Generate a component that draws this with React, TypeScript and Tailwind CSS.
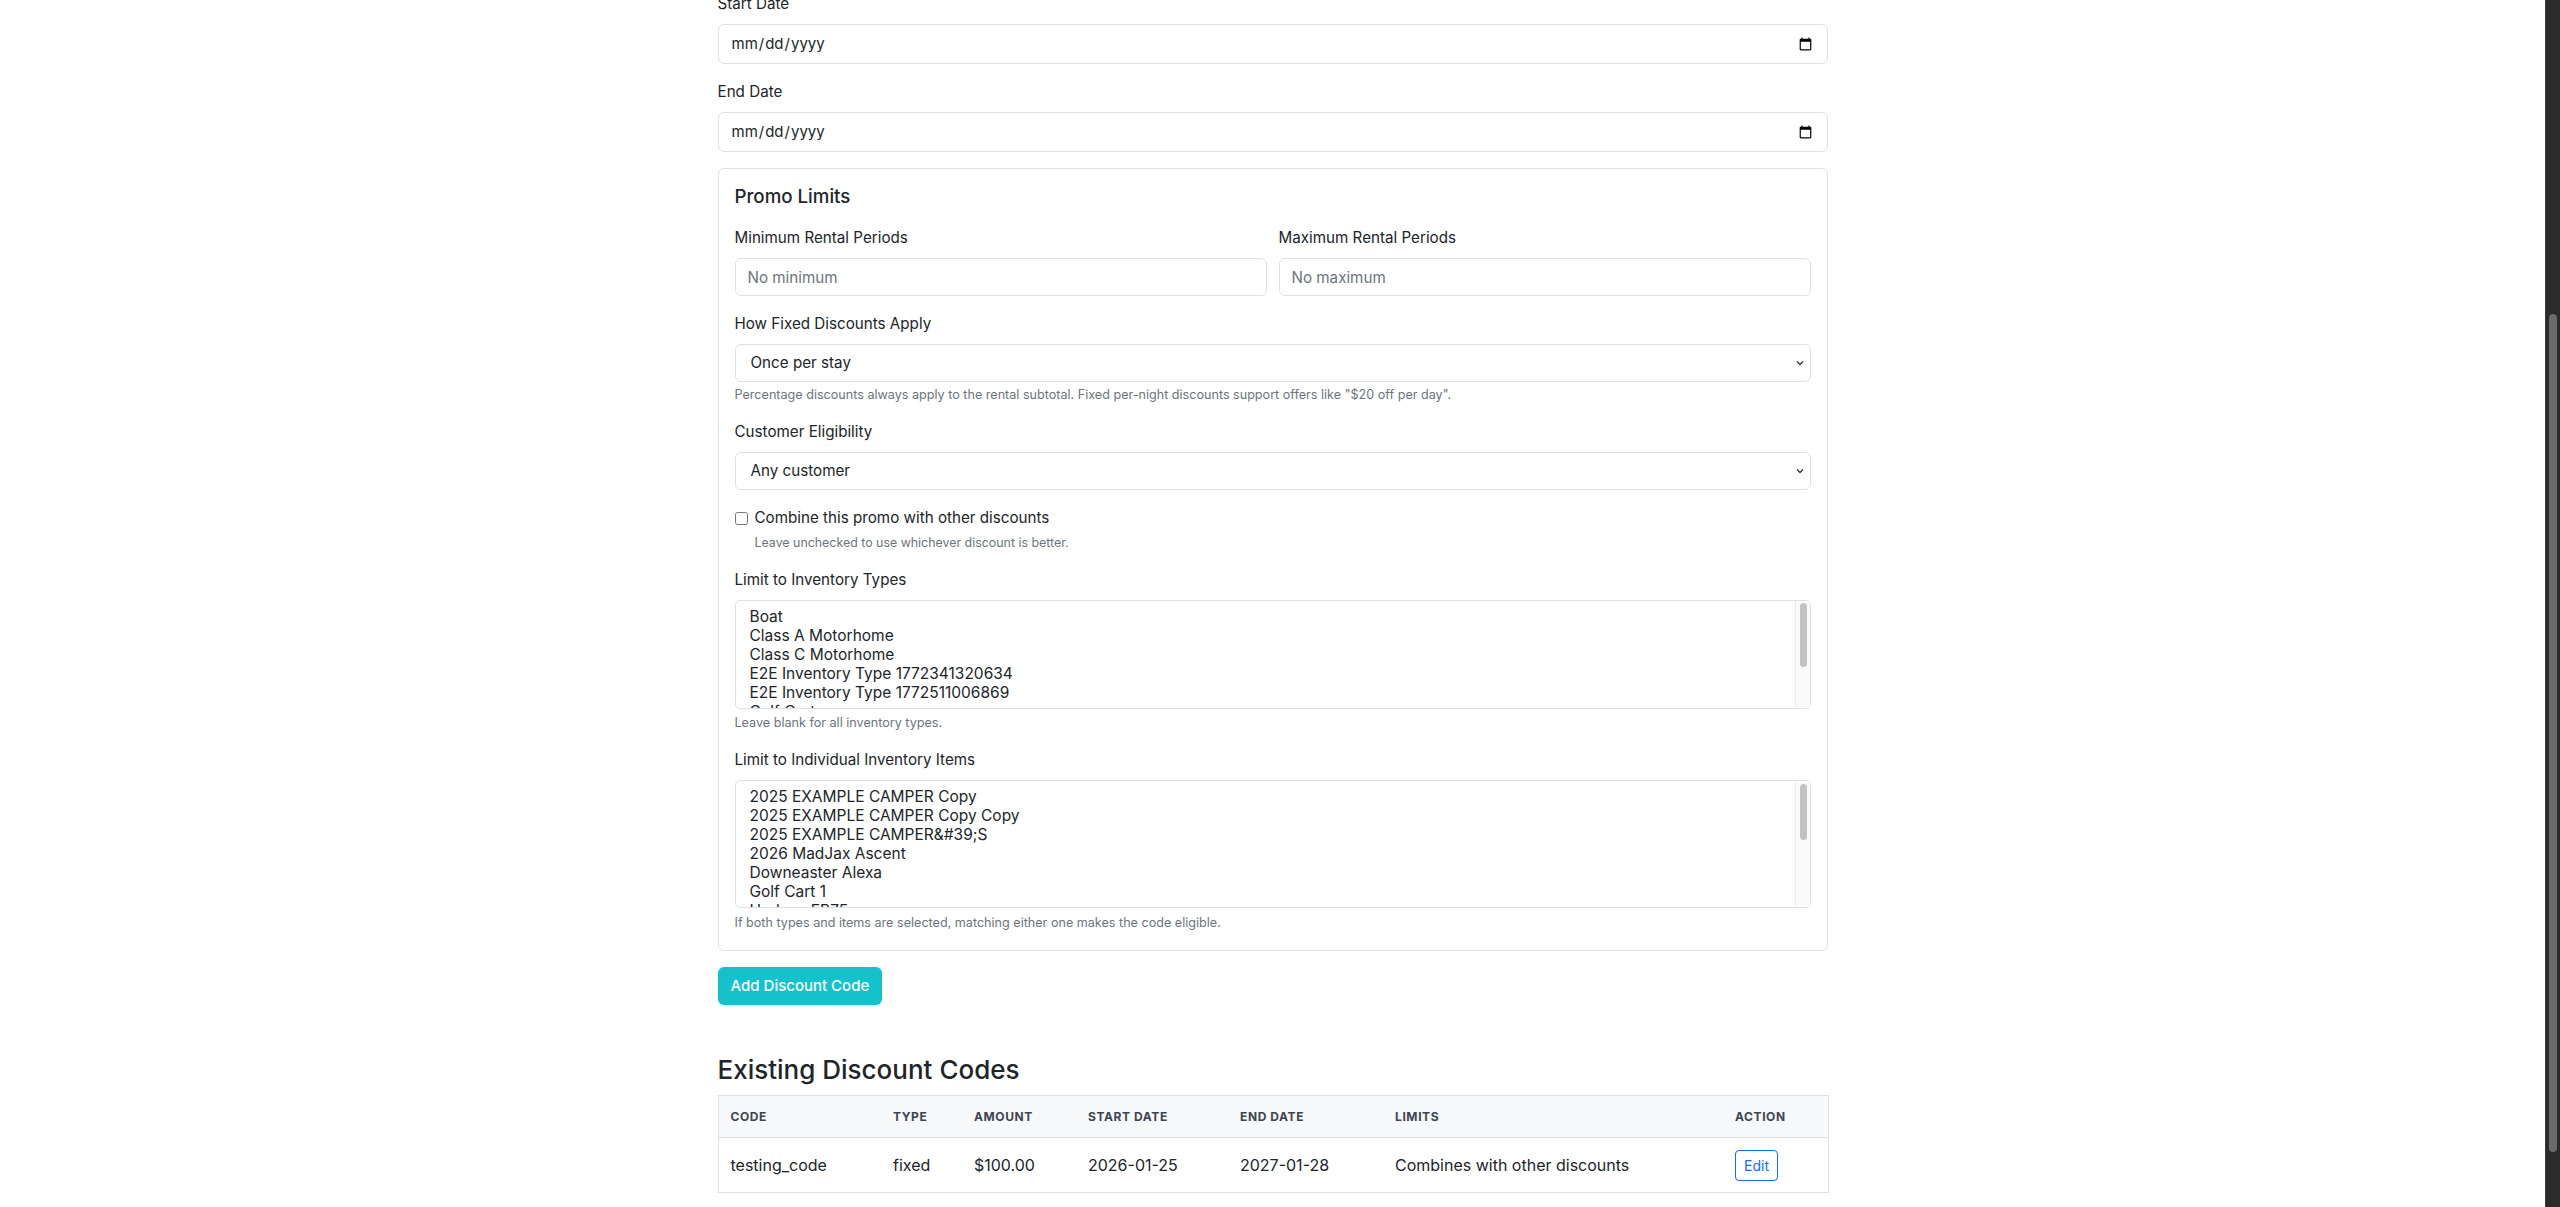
import React from "react";

const inventoryTypes = [
  "Boat",
  "Class A Motorhome",
  "Class C Motorhome",
  "E2E Inventory Type 1772341320634",
  "E2E Inventory Type 1772511006869",
  "Golf Cart",
];

const inventoryItems = [
  "2025 EXAMPLE CAMPER Copy",
  "2025 EXAMPLE CAMPER Copy Copy",
  "2025 EXAMPLE CAMPER&#39;S",
  "2026 MadJax Ascent",
  "Downeaster Alexa",
  "Golf Cart 1",
  "Hudson EB75",
];

function Chevron() {
  return (
    <svg
      className="pointer-events-none absolute right-[7px] top-1/2 -translate-y-1/2"
      width="8"
      height="6"
      viewBox="0 0 8 6"
      fill="none"
    >
      <path d="M1 1.5 4 4.5 7 1.5" stroke="#333" strokeWidth="1.3" />
    </svg>
  );
}

function ListBox({
  items,
  height,
  thumbTop,
  thumbHeight,
}: {
  items: string[];
  height: string;
  thumbTop: string;
  thumbHeight: string;
}) {
  return (
    <div
      role="listbox"
      className={`relative ${height} overflow-hidden rounded-[5px] border border-[#dee2e6] bg-white py-[6px]`}
    >
      {items.map((item) => (
        <div key={item} className="h-[19px] px-[14px] text-[15.5px] leading-[19px] text-[#212529]">
          {item}
        </div>
      ))}
      {/* scrollbar track overlays the options */}
      <div className="absolute right-0 top-0 bottom-0 w-[15px] border-l border-[#ececec] bg-[#fafafa]">
        <div className={`absolute left-[4px] ${thumbTop} ${thumbHeight} w-[7px] rounded-full bg-[#c2c2c2]`} />
      </div>
    </div>
  );
}

export default function App() {
  return (
    <div className="flex h-screen overflow-hidden bg-white font-['Inter','Liberation_Sans',sans-serif] text-[#212529]">
      <main className="min-w-0 flex-1">
        <div className="mx-auto -mt-[8px] w-[1110px] text-[15.2px]">
          {/* dates */}
          <div className="mb-4">
            <label className="mb-2 block leading-6">Start Date</label>
            <input
              type="date"
              className="block h-[40px] w-full rounded-md border border-[#dee2e6] px-3 text-[15px] text-[#212529]"
            />
          </div>
          <div className="mb-4">
            <label className="mb-2 block leading-6">End Date</label>
            <input
              type="date"
              className="block h-[40px] w-full rounded-md border border-[#dee2e6] px-3 text-[15px] text-[#212529]"
            />
          </div>

          {/* promo limits card */}
          <div className="mb-4 rounded-md border border-[#dee2e6] px-4 pt-4 pb-[18px]">
            <h5 className="mb-[17px] text-[18.7px] font-medium leading-6">Promo Limits</h5>

            <div className="mb-4 grid grid-cols-2 gap-3">
              <div>
                <label className="mb-2 block leading-6">Minimum Rental Periods</label>
                <input
                  type="number"
                  placeholder="No minimum"
                  className="block h-[38px] w-full rounded-md border border-[#dee2e6] px-3 placeholder:text-[#6c757d]"
                />
              </div>
              <div>
                <label className="mb-2 block leading-6">Maximum Rental Periods</label>
                <input
                  type="number"
                  placeholder="No maximum"
                  className="block h-[38px] w-full rounded-md border border-[#dee2e6] px-3 placeholder:text-[#6c757d]"
                />
              </div>
            </div>

            <div className="mb-4">
              <label className="mb-2 block leading-6">How Fixed Discounts Apply</label>
              <div className="relative">
                <select className="block h-[38px] w-full appearance-none rounded-md border border-[#dee2e6] bg-white pl-[15px] pr-8">
                  <option>Once per stay</option>
                  <option>Per rental period</option>
                </select>
                <Chevron />
              </div>
              <p className="mt-1 text-[12.6px] leading-[18px] text-[#6c757d]">
                Percentage discounts always apply to the rental subtotal. Fixed per-night discounts support offers
                like "$20 off per day".
              </p>
            </div>

            <div className="mb-4">
              <label className="mb-2 block leading-6">Customer Eligibility</label>
              <div className="relative">
                <select className="block h-[38px] w-full appearance-none rounded-md border border-[#dee2e6] bg-white pl-[15px] pr-8">
                  <option>Any customer</option>
                  <option>New customers only</option>
                </select>
                <Chevron />
              </div>
            </div>

            <div className="mb-4">
              <label className="flex h-6 items-center gap-[7px]">
                <input type="checkbox" className="m-0 h-[13px] w-[13px]" />
                <span>Combine this promo with other discounts</span>
              </label>
              <p className="mt-1 pl-[20px] text-[12.4px] leading-[18px] text-[#6c757d]">
                Leave unchecked to use whichever discount is better.
              </p>
            </div>

            <div className="mb-4">
              <label className="mb-2 block leading-6">Limit to Inventory Types</label>
              <ListBox items={inventoryTypes} height="h-[109px]" thumbTop="top-[2px]" thumbHeight="h-[64px]" />
              <p className="mt-[5px] text-[12.6px] leading-[18px] text-[#6c757d]">Leave blank for all inventory types.</p>
            </div>

            <div>
              <label className="mb-2 block leading-6">Limit to Individual Inventory Items</label>
              <ListBox items={inventoryItems} height="h-[128px]" thumbTop="top-[3px]" thumbHeight="h-[56px]" />
              <p className="mt-[6px] text-[12.6px] leading-[18px] text-[#6c757d]">
                If both types and items are selected, matching either one makes the code eligible.
              </p>
            </div>
          </div>

          <button className="h-[38px] rounded-md bg-[#15c1cb] px-[13px] text-[15px] font-medium text-white">
            Add Discount Code
          </button>

          {/* existing codes */}
          <h3 className="mt-12 mb-2 text-[26px] font-medium leading-[34px]">Existing Discount Codes</h3>
          <table className="w-full table-fixed border-collapse border border-[#dee2e6] text-left text-base">
            <colgroup>
              <col className="w-[163px]" />
              <col className="w-[81px]" />
              <col className="w-[114px]" />
              <col className="w-[152px]" />
              <col className="w-[155px]" />
              <col className="w-[340px]" />
              <col className="w-[105px]" />
            </colgroup>
            <thead className="bg-[#f8f9fa]">
              <tr className="border-b border-[#dee2e6]">
                {["Code", "Type", "Amount", "Start Date", "End Date", "Limits", "Action"].map((h) => (
                  <th
                    key={h}
                    className="h-[42px] px-3 text-xs font-bold uppercase tracking-wider text-[#3d4451]"
                  >
                    {h}
                  </th>
                ))}
              </tr>
            </thead>
            <tbody>
              <tr className="border-b border-[#dee2e6]">
                <td className="h-[55px] px-3">testing_code</td>
                <td className="px-3">fixed</td>
                <td className="px-3">$100.00</td>
                <td className="px-3">2026-01-25</td>
                <td className="px-3">2027-01-28</td>
                <td className="px-3">Combines with other discounts</td>
                <td className="px-3">
                  <button className="rounded border border-[#0d6efd] px-2 py-1 text-sm leading-[21px] text-[#0d6efd]">
                    Edit
                  </button>
                </td>
              </tr>
            </tbody>
          </table>
        </div>
      </main>

      {/* page scrollbar */}
      <div className="flex w-[15px] shrink-0 flex-col items-center border-l border-[#3a3a3a] bg-[#2b2b2b] pt-[314px]">
        <div className="h-[838px] w-[8px] rounded-full bg-[#6b6b6b]" />
      </div>
    </div>
  );
}
